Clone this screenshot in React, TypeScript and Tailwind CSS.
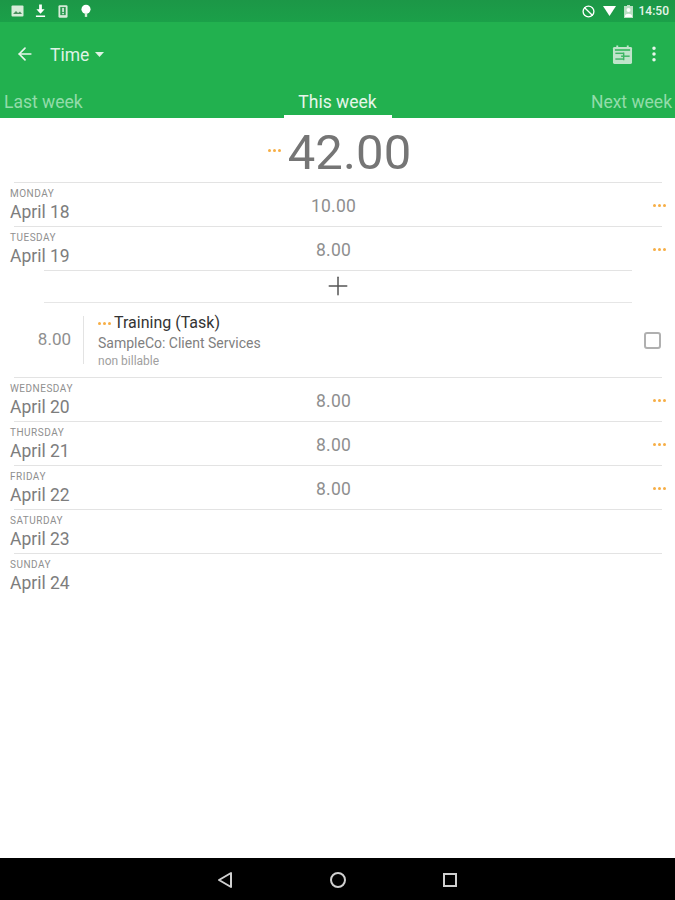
import React from 'react';
import { ArrowLeft, Ban, MoreVertical, Plus } from 'lucide-react';

const font = "font-['Roboto','Liberation_Sans',sans-serif]";

function Dots({ className = '' }: { className?: string }) {
  return (
    <span className={`flex gap-[2px] ${className}`}>
      <span className="w-[3px] h-[3px] rounded-full bg-[#f7ae45]" />
      <span className="w-[3px] h-[3px] rounded-full bg-[#f7ae45]" />
      <span className="w-[3px] h-[3px] rounded-full bg-[#f7ae45]" />
    </span>
  );
}

function StatusBar() {
  return (
    <div className="h-[22px] bg-gradient-to-b from-[#1c9747] to-[#1ba049] flex items-center justify-between pl-[11px] pr-[6px] text-white">
      <div className="flex items-center">
        <svg width="13" height="12" viewBox="0 0 13 12">
          <rect x="0.500" y="0.500" width="12" height="11" rx="1" fill="#d7ecd9" />
          <path d="M2 9l3-3 2 2 2-1.500 2 2.500z" fill="#4a8f5e" />
        </svg>
        <svg width="11" height="14" viewBox="0 0 12 14" className="ml-[11px]">
          <path d="M4.500 0h3v5h3L6 10 1.500 5h3z M1 12h10v1.500H1z" fill="#fff" />
        </svg>
        <svg width="10" height="15" viewBox="0 0 11 15" className="ml-[12px]">
          <rect x="0.500" y="0.500" width="10" height="14" rx="1.500" fill="#d7ecd9" />
          <rect x="2.500" y="2.500" width="6" height="9" fill="#2a9a50" />
          <rect x="4.800" y="3.500" width="1.500" height="4.500" fill="#fff" />
          <rect x="4.800" y="9" width="1.500" height="1.500" fill="#fff" />
        </svg>
        <svg width="10" height="14" viewBox="0 0 11 14" className="ml-[13px]">
          <circle cx="5.500" cy="5" r="5" fill="#fff" />
          <rect x="4.200" y="9" width="2.600" height="4.500" fill="#d7ecd9" />
        </svg>
      </div>
      <div className="flex items-center">
        <Ban size={13} strokeWidth={2.4} className="mr-[8px]" />
        <svg width="13" height="10" viewBox="0 0 13 10" className="mr-[8px]">
          <path d="M0 0h13L6.500 10z" fill="#fff" />
        </svg>
        <svg width="9" height="13" viewBox="0 0 9 13" className="mr-[6px]">
          <rect x="0" y="1" width="9" height="12" fill="#b9dfc3" />
          <rect x="3" y="0" width="3" height="1.500" fill="#b9dfc3" />
          <circle cx="4.500" cy="5" r="2" fill="#fff" />
          <path d="M1 11c0-3 7-3 7 0v1H1z" fill="#fff" />
        </svg>
        <span className="text-[12px] leading-none font-medium text-[#e6f4e9]">14:50</span>
      </div>
    </div>
  );
}

function Toolbar() {
  return (
    <div className="h-[64px] flex items-center justify-between text-white">
      <div className="flex items-center">
        <ArrowLeft size={20} strokeWidth={2} className="ml-[15px] text-[#e8f6ec]" />
        <span className="ml-[15px] mt-[3px] text-[17.500px] leading-none text-[#dff3e5]">Time</span>
        <svg width="9" height="5" viewBox="0 0 9 5" className="ml-[6px]">
          <path d="M0 0h9L4.500 5z" fill="#dff3e5" />
        </svg>
      </div>
      <div className="flex items-center">
        <svg width="21" height="20" viewBox="0 0 21 21" className="mt-[1px]">
          <rect x="0.500" y="2" width="20" height="18" rx="1.500" fill="#bfe4ca" />
          <rect x="4" y="0.500" width="2" height="3.500" fill="#bfe4ca" />
          <rect x="15" y="0.500" width="2" height="3.500" fill="#bfe4ca" />
          <rect x="2.500" y="4.500" width="16" height="1.500" fill="#22b14f" />
          <rect x="3" y="8" width="9" height="1.500" fill="#3fb564" />
          <rect x="9" y="11" width="9" height="1.500" fill="#3fb564" />
          <rect x="3" y="14" width="9" height="1.500" fill="#3fb564" />
          <rect x="11" y="8" width="1.500" height="8" fill="#3fb564" />
        </svg>
        <MoreVertical size={20} strokeWidth={2.2} className="ml-[11px] mr-[11px] text-[#e8f6ec]" />
      </div>
    </div>
  );
}

function Tabs() {
  return (
    <div className="h-[32px] grid grid-cols-3 text-[17.500px] leading-none">
      <div className="pl-[4px] pt-[8px] text-[#93dcaa]">Last week</div>
      <div className="flex justify-center">
        <div className="w-[108px] h-full border-b-[3px] border-white pt-[8px] text-center text-[#e6f6ea]">This week</div>
      </div>
      <div className="pr-[3px] pt-[8px] text-right text-[#93dcaa]">Next week</div>
    </div>
  );
}

function DayRow({ day, date, hours, shortLine }: { day: string; date: string; hours?: string; shortLine?: boolean }) {
  return (
    <div className="relative h-[44px] mx-[10px] pt-[5px]">
      <div className="text-[10px] leading-[12px] tracking-[0.500px] text-[#8f8f8f]">{day}</div>
      <div className="text-[17.500px] leading-[22px] mt-[1px] text-[#7d7d7d]">{date}</div>
      {hours && (
        <div className="absolute left-0 right-[8px] top-[13px] text-center text-[17.500px] leading-[20px] tracking-[0.200px] text-[#8f8f8f]">{hours}</div>
      )}
      {hours && <Dots className="absolute right-[-1px] top-[21px]" />}
      <div className={`absolute bottom-0 h-px bg-[#e3e3e3] ${shortLine ? 'left-[34px] right-[33px]' : 'left-[4px] right-[3px]'}`} />
    </div>
  );
}

function TaskDetail() {
  return (
    <div className="mx-[14px] mr-[13px]">
      <div className="mx-[30px] h-[32px] border-b border-[#e6e6e6] flex items-center justify-center">
        <Plus size={30} strokeWidth={1.200} className="text-[#555555] -mt-[2px]" />
      </div>
      <div className="relative h-[75px] border-b border-[#e3e3e3] flex items-center">
        <div className="w-[57px] text-right text-[17px] text-[#8f8f8f]">8.00</div>
        <div className="ml-[12px] w-px h-[48px] bg-[#e3e3e3]" />
        <div className="ml-[14px] mt-[2px]">
          <div className="flex items-center">
            <Dots className="mr-[3px]" />
            <span className="text-[16px] leading-[20px] text-[#333333]">Training (Task)</span>
          </div>
          <div className="text-[14px] leading-[20px] text-[#808080]">SampleCo: Client Services</div>
          <div className="text-[12px] leading-[16px] text-[#a0a0a0]">non billable</div>
        </div>
        <div className="ml-auto mr-[1px] w-[17px] h-[17px] rounded-[3px] border-2 border-[#b0b0b0]" />
      </div>
    </div>
  );
}

export default function App() {
  return (
    <div className={`w-[675px] h-[900px] flex flex-col bg-white overflow-hidden ${font}`}>
      <div className="bg-[#22b14f]">
        <StatusBar />
        <Toolbar />
        <Tabs />
      </div>

      <div className="flex-1">
        {/* Week total */}
        <div className="relative h-[65px] mx-[14px] mr-[13px] border-b border-[#e3e3e3] flex items-center justify-center pl-[3px]">
          <Dots className="mr-[7px]" />
          <span className="text-[49px] leading-none mt-[5px] tracking-[0.100px] text-[#757575]">42.00</span>
        </div>

        <DayRow day="MONDAY" date="April 18" hours="10.00" />
        <DayRow day="TUESDAY" date="April 19" hours="8.00" shortLine />
        <TaskDetail />
        <DayRow day="WEDNESDAY" date="April 20" hours="8.00" />
        <DayRow day="THURSDAY" date="April 21" hours="8.00" />
        <DayRow day="FRIDAY" date="April 22" hours="8.00" />
        <DayRow day="SATURDAY" date="April 23" />
        <div className="h-[44px] mx-[10px] pt-[5px]">
          <div className="text-[10px] leading-[12px] tracking-[0.500px] text-[#8f8f8f]">SUNDAY</div>
          <div className="text-[17.500px] leading-[22px] mt-[1px] text-[#7d7d7d]">April 24</div>
        </div>
      </div>

      {/* Nav bar */}
      <div className="h-[42px] pt-[2px] pr-[2px] bg-black flex items-center justify-center">
        <svg width="16" height="18" viewBox="0 0 16 18" className="mr-[97px]">
          <path d="M14 2v14L2 9z" fill="none" stroke="#d0d0d0" strokeWidth="2" strokeLinejoin="round" />
        </svg>
        <div className="w-[16px] h-[16px] rounded-full border-2 border-[#d0d0d0]" />
        <div className="ml-[97px] w-[14px] h-[14px] border-2 border-[#d0d0d0]" />
      </div>
    </div>
  );
}
